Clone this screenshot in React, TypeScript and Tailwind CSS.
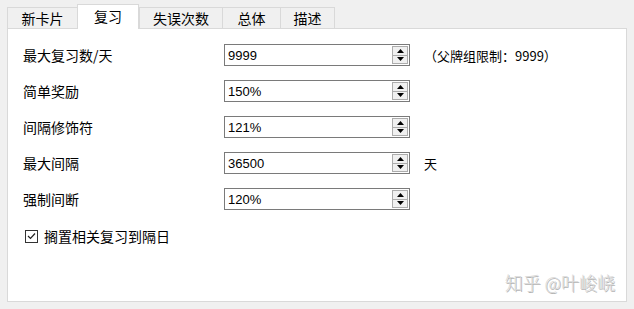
import React from 'react';

const tabs = [
  { label: '新卡片', w: 'w-[70px]' },
  { label: '复习', w: 'w-[62px]', active: true },
  { label: '失误次数', w: 'w-[83px]' },
  { label: '总体', w: 'w-[58px]' },
  { label: '描述', w: 'w-[55px]' },
];

const rows = [
  { label: '最大复习数/天', value: '9999', extra: '（父牌组限制：9999）' },
  { label: '简单奖励', value: '150%' },
  { label: '间隔修饰符', value: '121%' },
  { label: '最大间隔', value: '36500', extra: '天' },
  { label: '强制间断', value: '120%' },
];

function SpinBox({ value }: { value: string }) {
  return (
    <div className="flex h-[22px] w-[186px] items-center border border-[#7a7a7a] bg-white pl-[3px] pr-[1px]">
      <span className="flex-1 font-['Liberation_Sans',sans-serif] text-[13px] leading-none text-black">{value}</span>
      {/* spinner */}
      <div className="flex h-[18px] w-[16px] flex-col border border-[#acacac] bg-[#f0f0f0]">
        <div className="flex flex-1 items-center justify-center border-b border-[#acacac]">
          <svg width="7" height="4" viewBox="0 0 7 4"><path d="M3.5 0 7 4H0z" fill="#000" /></svg>
        </div>
        <div className="flex flex-1 items-center justify-center">
          <svg width="7" height="4" viewBox="0 0 7 4"><path d="M0 0h7L3.5 4z" fill="#000" /></svg>
        </div>
      </div>
    </div>
  );
}

export default function App() {
  return (
    <div className="relative h-[309px] w-[634px] overflow-hidden bg-[#f0f0f0] font-['Noto_Sans_CJK_SC','Noto_Sans',sans-serif] text-black">
      {/* Tabs */}
      <div className="flex h-[28px] items-end pl-[7px]">
        {tabs.map((t, i) => (
          <div
            key={t.label}
            className={
              t.active
                ? `relative z-10 -mb-px flex h-[25px] ${t.w} items-center justify-center border-x border-t border-[#d9d9d9] bg-white pb-[2px] text-[14px]`
                : `flex h-[21px] ${t.w} items-center justify-center border-t border-l border-[#d9d9d9] bg-[#f0f0f0] text-[14px] ${i === tabs.length - 1 ? 'border-r' : ''}`
            }
          >
            {t.label}
          </div>
        ))}
      </div>

      {/* Panel */}
      <div className="relative ml-[7px] h-[274px] w-[620px] border border-[#d9d9d9] bg-white pl-[15px] pt-[15px]">
        <div className="flex flex-col gap-[14px]">
          {rows.map((r) => (
            <div key={r.label} className="flex h-[22px] items-center">
              <span className="w-[201px] text-[14px] leading-none">{r.label}</span>
              <SpinBox value={r.value} />
              {r.extra && <span className="ml-[14px] text-[13px] leading-none">{r.extra}</span>}
            </div>
          ))}
        </div>

        <label className="mt-[16px] flex h-[20px] items-center gap-[6px] pl-[2px]">
          <span className="flex h-[13px] w-[13px] items-center justify-center border border-[#333]">
            <svg width="9" height="8" viewBox="0 0 9 8" fill="none" stroke="#222" strokeWidth="1.2">
              <path d="M1 4l2.5 2.5L8 1.5" />
            </svg>
          </span>
          <span className="text-[14px] leading-none">搁置相关复习到隔日</span>
        </label>

        {/* watermark */}
        <div className="absolute bottom-[10px] right-[11px] text-[18px] font-light leading-none text-[#dadada] [text-shadow:1px_1px_0_#b4b4b4]">
          知乎 @叶峻峣
        </div>
      </div>
    </div>
  );
}
